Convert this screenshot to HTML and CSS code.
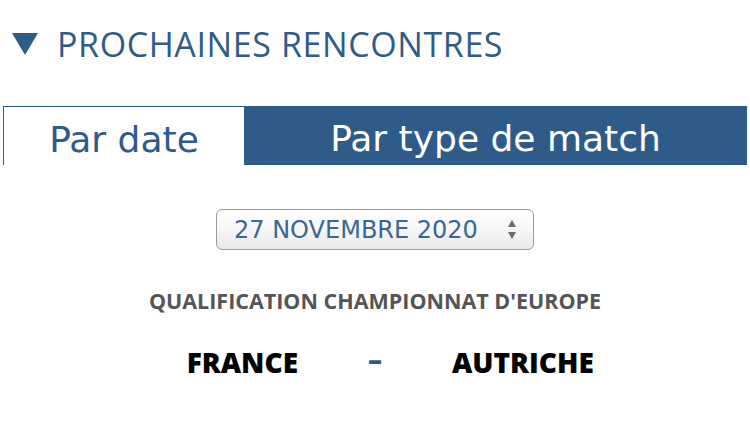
FILE: index.html
```html
<!DOCTYPE html>
<html lang="fr">
<head>
  <meta charset="UTF-8" />
  <meta name="viewport" content="width=device-width, initial-scale=1.0"/>
  <title>Prochaines rencontres</title>
  <link rel="stylesheet" href="styles.css">
</head>
<body>
  <div class="section-title">
    <span class="caret"></span>
    <h2>PROCHAINES RENCONTRES</h2>
  </div>

  <div class="tabs">
    <a class="tab active">Par date</a>
    <a class="tab">Par type de match</a>
  </div>

  <div class="picker">
    <div class="select">
      <span class="select-value">27 NOVEMBRE 2020</span>
      <svg class="spin" width="8" height="20" viewBox="0 0 8 20">
        <polygon points="4,0 8,7 0,7" fill="#6b6b6b"/>
        <polygon points="0,12 8,12 4,19" fill="#6b6b6b"/>
      </svg>
    </div>
  </div>

  <p class="competition">QUALIFICATION CHAMPIONNAT D'EUROPE</p>

  <div class="match">
    <span class="team home">FRANCE</span>
    <span class="dash">–</span>
    <span class="team away">AUTRICHE</span>
  </div>
</body>
</html>
```

FILE: styles.css
```css
body {
  margin: 0;
  background: #fff;
  font-family: "Open Sans", sans-serif;
}

/* titre de section */
.section-title {
  display: flex;
  align-items: center;
  padding: 24px 0 0 12px;
  height: 40px;
}

.caret {
  width: 0;
  height: 0;
  border-left: 13.5px solid transparent;
  border-right: 13.5px solid transparent;
  border-top: 22px solid #2f5b89;
  margin-right: 19px;
}

.section-title h2 {
  margin: 0;
  font-size: 34px;
  font-weight: 400;
  line-height: 40px;
  letter-spacing: 0.6px;
  color: #2f5b89;
}

/* onglets */
.tabs {
  display: flex;
  margin: 42px 3px 0 3px;
  height: 59px;
}

.tab {
  display: flex;
  align-items: center;
  justify-content: center;
  padding-top: 6px;
  font-family: "DejaVu Sans", Verdana, sans-serif;
  font-size: 36px;
  color: #fff;
  background: #2f5b89;
  flex: 1;
}

.tab.active {
  flex: 0 0 240px;
  background: #fff;
  color: #2f5b89;
  border-top: 1px solid #2f5b89;
  border-left: 1px solid #2f5b89;
}

/* sélecteur de date */
.picker {
  display: flex;
  justify-content: center;
  margin-top: 44px;
}

.select {
  box-sizing: border-box;
  width: 318px;
  height: 41px;
  border: 1px solid #9a9a9a;
  border-radius: 6px;
  background: linear-gradient(#ffffff, #f6f6f6 50%, #e9e9e9);
  display: flex;
  align-items: center;
  justify-content: space-between;
  padding: 1px 17px 0 17px;
}

.select-value {
  font-family: "DejaVu Sans", Verdana, sans-serif;
  font-size: 24px;
  color: #3a6796;
}

.spin {
  display: block;
}

/* compétition */
.competition {
  margin: 36px 0 0 0;
  text-align: center;
  font-size: 21.5px;
  font-weight: 700;
  color: #555;
}

.match {
  display: grid;
  grid-template-columns: 1fr auto 1fr;
  column-gap: 70px;
  align-items: center;
  margin-top: 28px;
  font-size: 28px;
  font-weight: 800;
  color: #000;
}

.home {
  text-align: right;
}

.dash {
  position: relative;
  top: -3px;
  color: #2f5b89;
}
```
